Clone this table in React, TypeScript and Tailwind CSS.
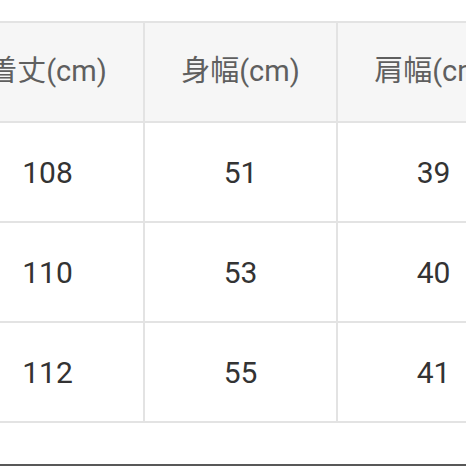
import React from "react";

const headers = ["着丈(cm)", "身幅(cm)", "肩幅(cm)"];
const rows = [
  ["108", "51", "39"],
  ["110", "53", "40"],
  ["112", "55", "41"],
];

export default function App() {
  return (
    <div
      className="w-[466px] h-[466px] overflow-hidden bg-white border-b-2 border-[#585858]"
      style={{ fontFamily: 'Roboto, "Noto Sans CJK JP", sans-serif' }}
    >
      <div className="pt-[21px] ml-[-50px]">
        <div className="grid grid-cols-[191px_191px_191px] grid-rows-[98px_98px_98px_98px] gap-[2px] p-[2px] bg-[#e3e3e3] w-max">
          {headers.map((h) => (
            <div
              key={h}
              className="bg-[#f6f6f6] flex items-center justify-center text-[29px] text-[#5f5f5f] whitespace-nowrap"
            >
              {h}
            </div>
          ))}
          {rows.flat().map((v, i) => (
            <div
              key={i}
              className="bg-white flex items-center justify-center text-[30px] text-[#333333]"
            >
              {v}
            </div>
          ))}
        </div>
      </div>
    </div>
  );
}
